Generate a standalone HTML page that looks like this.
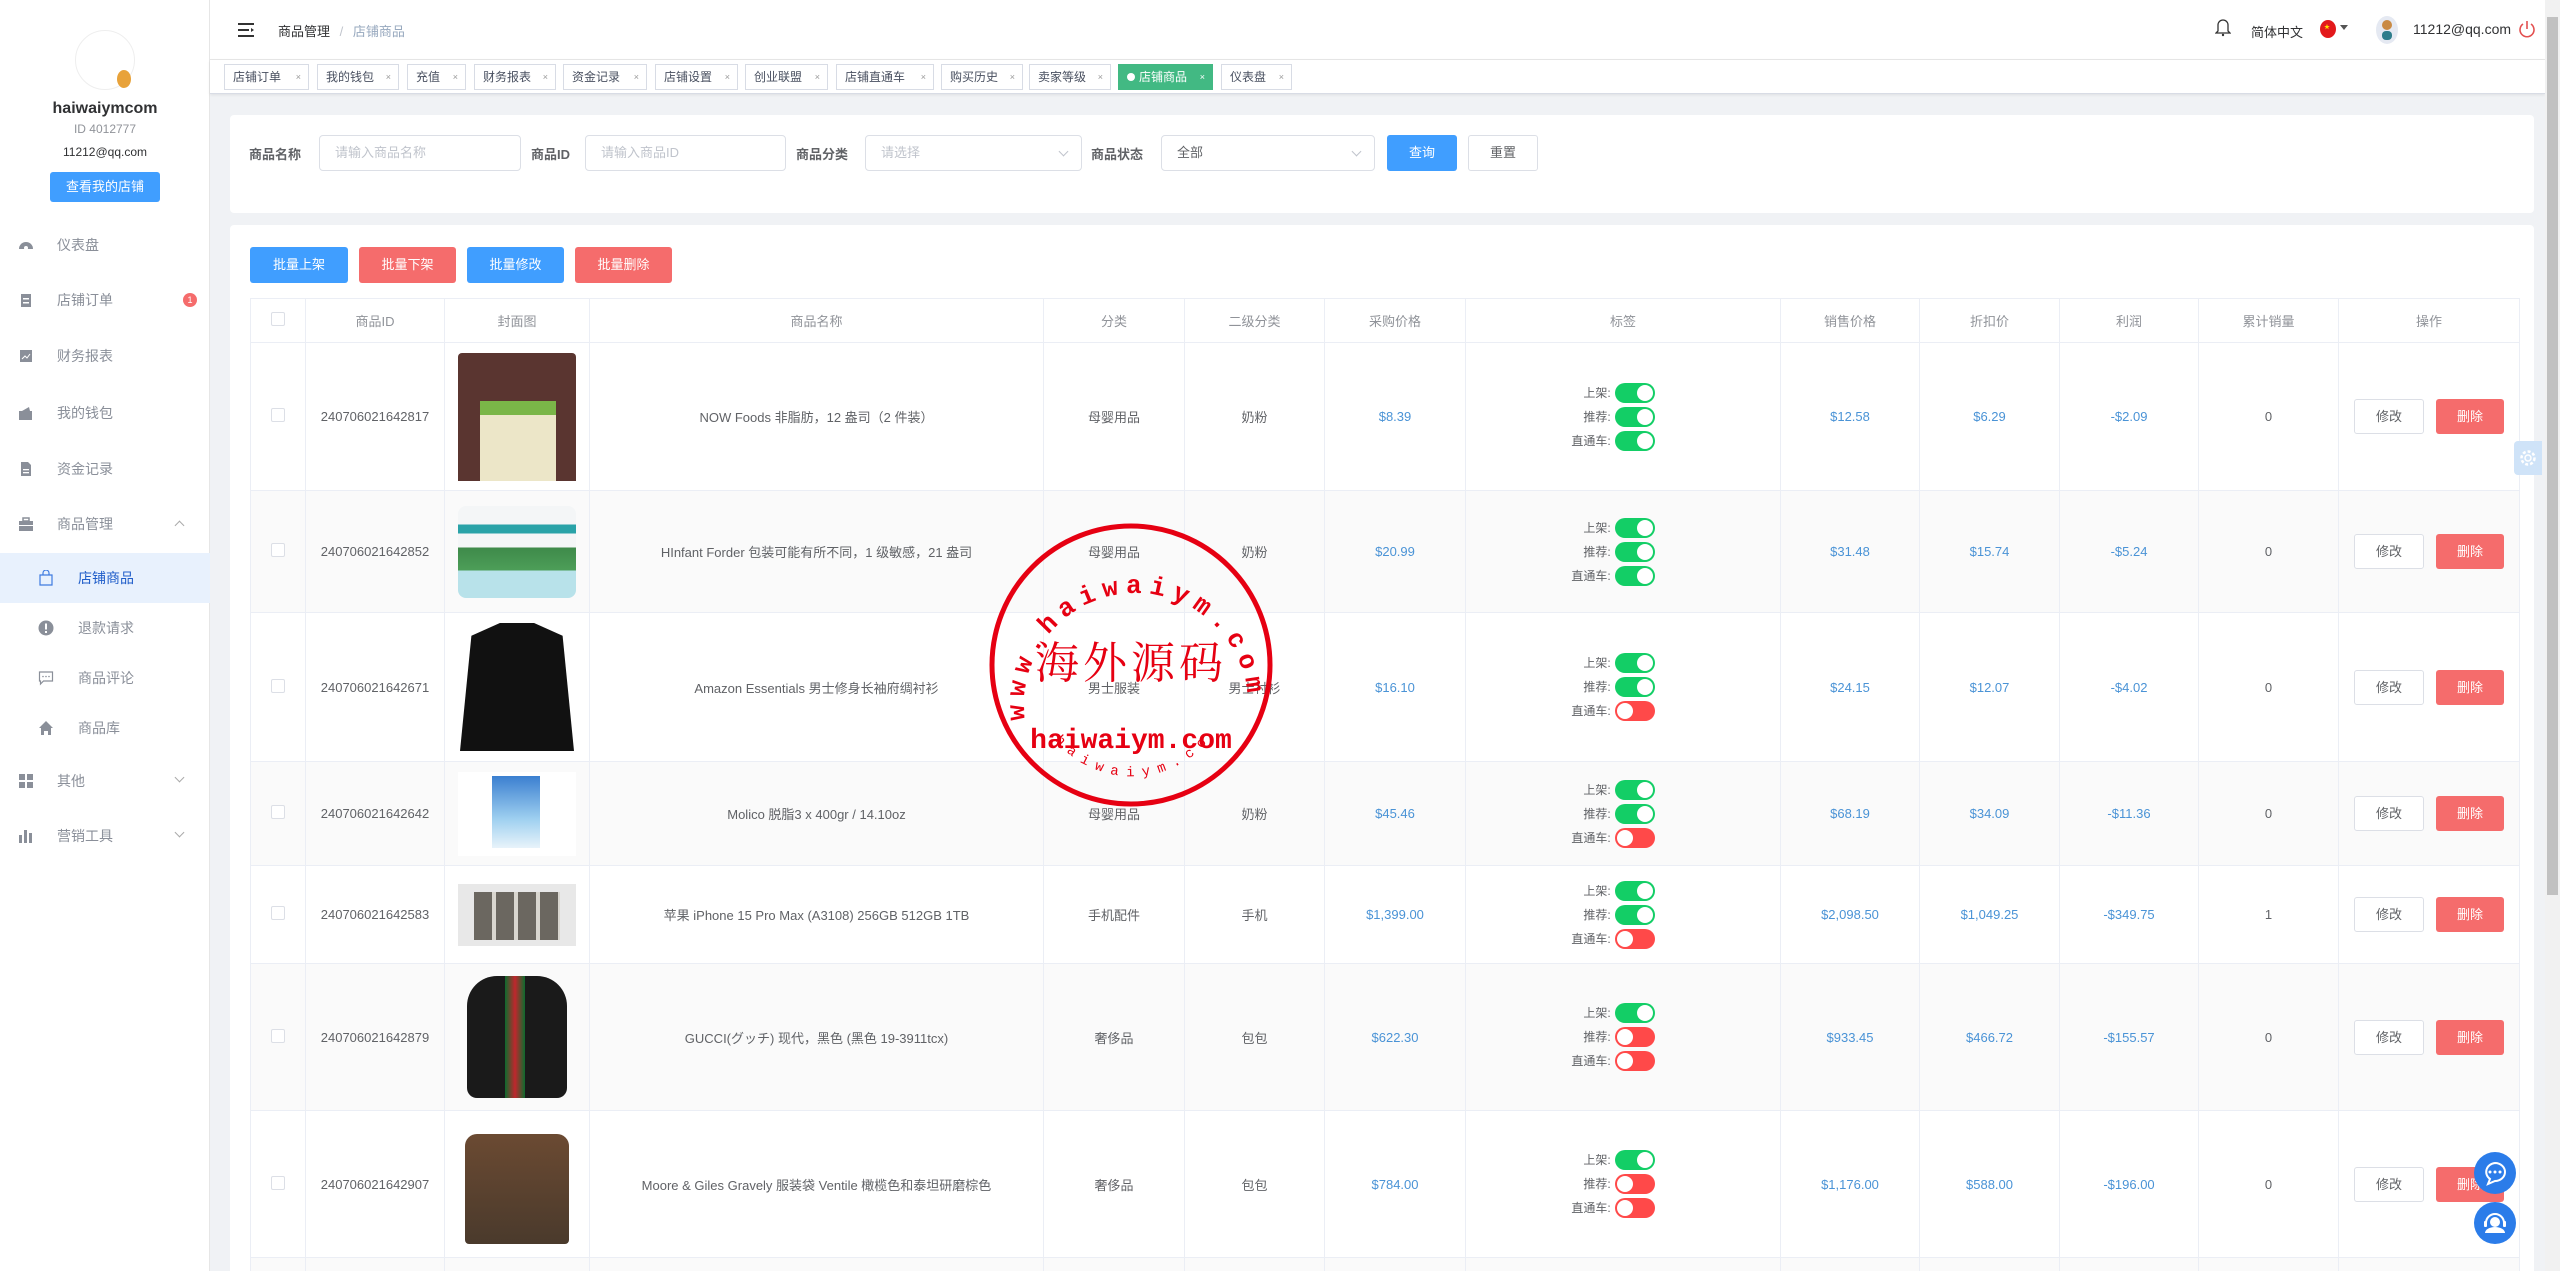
<!DOCTYPE html>
<html><head><meta charset="utf-8">
<style>
*{box-sizing:border-box;margin:0;padding:0}
html,body{width:2560px;height:1271px;overflow:hidden}
body{background:#f0f2f5;font-family:"Liberation Sans","Noto Sans CJK SC",sans-serif;color:#606266;position:relative}
#wrap{position:absolute;left:0;top:0;width:2560px;height:1271px;overflow:hidden}
.abs{position:absolute}
#side{left:0;top:0;width:210px;height:1271px;background:#fff;border-right:1px solid #e6e6e6}
.mi{position:absolute;left:0;width:210px;height:50px;display:flex;align-items:center;font-size:14px;color:#8a8f99}
.mi .ic{position:absolute;left:18px;width:16px;height:16px}
.mi .tx{position:absolute;left:57px}
.sub .ic{left:38px}.sub .tx{left:78px}
.arrow{position:absolute;left:176px;width:7px;height:7px;border-right:1px solid #aaa;border-bottom:1px solid #aaa}
#top{left:210px;top:0;width:2335px;height:60px;background:#fff;border-bottom:1px solid #e8e8e8}
#tabs{left:210px;top:60px;width:2335px;height:34px;background:#fff;border-bottom:1px solid #d8dce5;box-shadow:0 1px 3px rgba(0,0,0,.08)}
.tab{position:absolute;top:4px;height:26px;border:1px solid #d8dce5;background:#fff;font-size:12px;color:#495060;line-height:24px;padding-left:8px}
.tab i{font-style:normal;font-size:9px;color:#999;position:absolute;right:7px;top:0}
.tab.act{background:#42b983;border-color:#42b983;color:#fff}
.tab.act i{color:#fff}
.card{background:#fff;border-radius:4px}
.lbl{position:absolute;font-size:13px;color:#606266;font-weight:bold}
.inp{position:absolute;height:36px;border:1px solid #dcdfe6;border-radius:4px;font-size:13px;color:#c0c4cc;line-height:34px;padding-left:15px;background:#fff}
.chev{position:absolute;right:14px;top:12px;width:7px;height:7px;border-right:1px solid #c0c4cc;border-bottom:1px solid #c0c4cc;transform:rotate(45deg)}
.btn{position:absolute;height:36px;border-radius:3px;font-size:13px;color:#fff;text-align:center;line-height:36px}
table{position:absolute;left:250px;top:298px;border-collapse:collapse;table-layout:fixed;width:2269px;font-size:13px;color:#606266}
td,th{border:1px solid #ebeef5;text-align:center;vertical-align:middle;padding:0}
th{height:44px;font-weight:normal;color:#909399}
tr.st td{background:#fafafa}
.cb{display:inline-block;width:14px;height:14px;border:1px solid #dcdfe6;border-radius:2px;background:#fff}
.blue{color:#4a93d6}
.tags{display:inline-block;text-align:right;font-size:12px;color:#606266;margin-left:-20px}
.tags div{height:24px;line-height:24px;display:flex;align-items:center;justify-content:flex-end}
.sw{display:inline-block;width:40px;height:20px;border-radius:10px;position:relative;margin-left:4px}
.sw:after{content:"";position:absolute;top:2px;width:16px;height:16px;border-radius:50%;background:#fff}
.on{background:#13ce66}.on:after{right:2px}
.off{background:#ff4949}.off:after{left:2px}
.ed{display:inline-block;width:70px;height:35px;line-height:33px;border:1px solid #dcdfe6;border-radius:3px;color:#606266;background:#fff;vertical-align:middle}
.de{display:inline-block;width:68px;height:35px;line-height:35px;border-radius:3px;background:#f56c6c;color:#fff;margin-left:12px;vertical-align:middle}
.img{margin:0 auto;position:relative}
</style></head><body><div id="wrap">

<div id="side" class="abs">
  <div class="abs" style="left:75px;top:30px;width:60px;height:60px;border-radius:50%;border:1px solid #eee"></div>
  <div class="abs" style="left:117px;top:70px;width:14px;height:18px;border-radius:50%;background:#e8a23a"></div>
  <div class="abs" style="left:0;top:100px;width:210px;text-align:center;font-size:16px;font-weight:bold;color:#303133">haiwaiymcom</div>
  <div class="abs" style="left:0;top:122px;width:210px;text-align:center;font-size:12px;color:#909399">ID 4012777</div>
  <div class="abs" style="left:0;top:145px;width:210px;text-align:center;font-size:12px;color:#303133">11212@qq.com</div>
  <div class="abs" style="left:50px;top:172px;width:110px;height:30px;background:#409eff;border-radius:3px;color:#fff;font-size:13px;text-align:center;line-height:30px">查看我的店铺</div>

  <div class="mi" style="top:220px"><svg class="ic" viewBox="0 0 16 16"><path d="M1 12a7 7 0 0114 0z" fill="#8a8f99"/><circle cx="8" cy="11" r="2" fill="#fff"/></svg><span class="tx">仪表盘</span></div>
  <div class="mi" style="top:275px"><svg class="ic" viewBox="0 0 16 16"><rect x="3" y="2" width="10" height="13" fill="#8a8f99"/><rect x="5" y="6" width="6" height="1.5" fill="#fff"/><rect x="5" y="10" width="6" height="1.5" fill="#fff"/></svg><span class="tx">店铺订单</span><span class="abs" style="left:183px;top:18px;width:14px;height:14px;border-radius:50%;background:#f56c6c;color:#fff;font-size:9px;text-align:center;line-height:14px">1</span></div>
  <div class="mi" style="top:331px"><svg class="ic" viewBox="0 0 16 16"><rect x="2" y="2" width="12" height="12" fill="#8a8f99"/><path d="M4 11l3-3 2 2 3-4" stroke="#fff" fill="none"/></svg><span class="tx">财务报表</span></div>
  <div class="mi" style="top:388px"><svg class="ic" viewBox="0 0 16 16"><rect x="1" y="6" width="13" height="9" fill="#8a8f99"/><path d="M4 6l7-4 1 4z" fill="#8a8f99"/></svg><span class="tx">我的钱包</span></div>
  <div class="mi" style="top:444px"><svg class="ic" viewBox="0 0 16 16"><path d="M3 1h7l3 3v11H3z" fill="#8a8f99"/><rect x="5" y="8" width="6" height="1.3" fill="#fff"/><rect x="5" y="11" width="6" height="1.3" fill="#fff"/></svg><span class="tx">资金记录</span></div>
  <div class="mi" style="top:499px"><svg class="ic" viewBox="0 0 16 16"><rect x="1" y="5" width="14" height="10" fill="#8a8f99"/><rect x="5" y="2" width="6" height="3" fill="none" stroke="#8a8f99" stroke-width="1.5"/><rect x="1" y="9" width="14" height="1" fill="#fff"/></svg><span class="tx">商品管理</span><span class="arrow" style="top:23px;transform:rotate(-135deg)"></span></div>
  <div class="mi sub" style="top:553px;background:#e8f1fd;color:#1f5dc9"><svg class="ic" viewBox="0 0 16 16"><path d="M2 5h12v10H2z M5 5V3a3 3 0 016 0v2" fill="none" stroke="#3e7be0" stroke-width="1.2"/></svg><span class="tx">店铺商品</span></div>
  <div class="mi sub" style="top:603px"><svg class="ic" viewBox="0 0 16 16"><circle cx="8" cy="8" r="7.5" fill="#8a8f99"/><rect x="7" y="3.5" width="2" height="6" fill="#fff"/><rect x="7" y="11" width="2" height="2" fill="#fff"/></svg><span class="tx">退款请求</span></div>
  <div class="mi sub" style="top:653px"><svg class="ic" viewBox="0 0 16 16"><path d="M1.5 2h13v9h-9l-3 3v-3h-1z" fill="none" stroke="#8a8f99" stroke-width="1.2"/><circle cx="5" cy="6.5" r=".8" fill="#8a8f99"/><circle cx="8" cy="6.5" r=".8" fill="#8a8f99"/><circle cx="11" cy="6.5" r=".8" fill="#8a8f99"/></svg><span class="tx">商品评论</span></div>
  <div class="mi sub" style="top:703px"><svg class="ic" viewBox="0 0 16 16"><path d="M8 1l7 7h-2v7h-3v-4H6v4H3V8H1z" fill="#8a8f99"/></svg><span class="tx">商品库</span></div>
  <div class="mi" style="top:756px"><svg class="ic" viewBox="0 0 16 16"><rect x="1" y="1" width="6" height="6" fill="#8a8f99"/><rect x="9" y="1" width="6" height="6" fill="#8a8f99"/><rect x="1" y="9" width="6" height="6" fill="#8a8f99"/><rect x="9" y="9" width="6" height="6" fill="#8a8f99"/></svg><span class="tx">其他</span><span class="arrow" style="top:18px;transform:rotate(45deg)"></span></div>
  <div class="mi" style="top:811px"><svg class="ic" viewBox="0 0 16 16"><rect x="1" y="7" width="3" height="8" fill="#8a8f99"/><rect x="6" y="2" width="3" height="13" fill="#8a8f99"/><rect x="11" y="5" width="3" height="10" fill="#8a8f99"/></svg><span class="tx">营销工具</span><span class="arrow" style="top:18px;transform:rotate(45deg)"></span></div>
</div>

<div id="top" class="abs">
  <svg class="abs" style="left:28px;top:23px" width="16" height="14" viewBox="0 0 16 14"><rect y="0" width="16" height="2" fill="#333"/><rect y="6" width="11" height="2" fill="#333"/><rect y="12" width="16" height="2" fill="#333"/><path d="M13 5l3 2-3 2z" fill="#333"/></svg>
  <div class="abs" style="left:68px;top:21px;font-size:13px;color:#303133">商品管理 <span style="color:#c0c4cc;margin:0 6px">/</span> <span style="color:#97a8be">店铺商品</span></div>
  <svg class="abs" style="left:2005px;top:17px" width="16" height="20" viewBox="0 0 16 20"><path d="M3 14V8a5 5 0 0110 0v6l2 2H1z" fill="none" stroke="#333" stroke-width="1.3"/><circle cx="8" cy="18" r="1.2" fill="#333"/></svg>
  <div class="abs" style="left:2041px;top:22px;font-size:13px;color:#303133">简体中文</div>
  <div class="abs" style="left:2110px;top:20px;width:16px;height:18px;border-radius:50%;background:#e3191b"></div>
  <div class="abs" style="left:2114px;top:22px;font-size:6px;color:#ffde00">★</div>
  <div class="abs" style="left:2130px;top:25px;width:0;height:0;border-left:4px solid transparent;border-right:4px solid transparent;border-top:5px solid #555"></div>
  <div class="abs" style="left:2166px;top:16px;width:22px;height:28px;border-radius:50%;background:#e5e9f2"></div>
  <div class="abs" style="left:2172px;top:20px;width:10px;height:10px;border-radius:50%;background:#c98a44"></div>
  <div class="abs" style="left:2172px;top:31px;width:10px;height:9px;border-radius:4px;background:#2e7d8b"></div>
  <div class="abs" style="left:2203px;top:21px;font-size:14px;color:#303133">11212@qq.com</div>
  <svg class="abs" style="left:2308px;top:19px" width="18" height="20" viewBox="0 0 18 20"><path d="M5 5a7 7 0 108 0" fill="none" stroke="#e35050" stroke-width="1.6"/><path d="M9 2v8" stroke="#e35050" stroke-width="1.6"/></svg>
</div>

<div id="tabs" class="abs">
  <div class="tab" style="left:14px;width:85px">店铺订单<i>×</i></div>
  <div class="tab" style="left:107px;width:82px">我的钱包<i>×</i></div>
  <div class="tab" style="left:197px;width:59px">充值<i>×</i></div>
  <div class="tab" style="left:264px;width:82px">财务报表<i>×</i></div>
  <div class="tab" style="left:353px;width:84px">资金记录<i>×</i></div>
  <div class="tab" style="left:445px;width:83px">店铺设置<i>×</i></div>
  <div class="tab" style="left:535px;width:83px">创业联盟<i>×</i></div>
  <div class="tab" style="left:626px;width:98px">店铺直通车<i>×</i></div>
  <div class="tab" style="left:731px;width:82px">购买历史<i>×</i></div>
  <div class="tab" style="left:819px;width:82px">卖家等级<i>×</i></div>
  <div class="tab act" style="left:908px;width:95px"><span style="display:inline-block;width:8px;height:8px;border-radius:50%;background:#fff;margin-right:4px"></span>店铺商品<i>×</i></div>
  <div class="tab" style="left:1011px;width:71px">仪表盘<i>×</i></div>
</div>

<div class="abs" style="left:2545px;top:0;width:15px;height:1271px;background:#f1f1f1"></div>
<div class="abs" style="left:2547px;top:17px;width:11px;height:878px;background:#c1c1c1"></div>

<div class="card abs" style="left:230px;top:115px;width:2304px;height:98px">
  <div class="lbl" style="left:19px;top:29px">商品名称</div>
  <div class="inp" style="left:89px;top:20px;width:202px">请输入商品名称</div>
  <div class="lbl" style="left:301px;top:29px">商品ID</div>
  <div class="inp" style="left:355px;top:20px;width:201px">请输入商品ID</div>
  <div class="lbl" style="left:566px;top:29px">商品分类</div>
  <div class="inp" style="left:635px;top:20px;width:217px">请选择<span class="chev"></span></div>
  <div class="lbl" style="left:861px;top:29px">商品状态</div>
  <div class="inp" style="left:931px;top:20px;width:214px;color:#606266">全部<span class="chev"></span></div>
  <div class="btn" style="left:1157px;top:20px;width:70px;background:#409eff">查询</div>
  <div class="btn" style="left:1238px;top:20px;width:70px;border:1px solid #dcdfe6;color:#606266;background:#fff;line-height:34px">重置</div>
</div>

<div class="card abs" style="left:230px;top:225px;width:2304px;height:1100px"></div>
<div class="btn" style="left:250px;top:247px;width:98px;background:#409eff">批量上架</div>
<div class="btn" style="left:359px;top:247px;width:97px;background:#f56c6c">批量下架</div>
<div class="btn" style="left:467px;top:247px;width:97px;background:#409eff">批量修改</div>
<div class="btn" style="left:575px;top:247px;width:97px;background:#f56c6c">批量删除</div>

<table>
<colgroup><col style="width:55px"><col style="width:139px"><col style="width:145px"><col style="width:454px"><col style="width:141px"><col style="width:140px"><col style="width:141px"><col style="width:315px"><col style="width:139px"><col style="width:140px"><col style="width:139px"><col style="width:140px"><col style="width:181px"></colgroup>
<tr><th><span class="cb"></span></th><th>商品ID</th><th>封面图</th><th>商品名称</th><th>分类</th><th>二级分类</th><th>采购价格</th><th>标签</th><th>销售价格</th><th>折扣价</th><th>利润</th><th>累计销量</th><th>操作</th></tr>

<tr style="height:148px"><td><span class="cb"></span></td><td>240706021642817</td><td><div class="img" style="width:118px;height:128px;background:#5a3530;border-radius:4px 4px 0 0"><div class="abs" style="left:22px;top:48px;width:76px;height:80px;background:#ece6c8;border-top:14px solid #7ab648"></div></div></td><td>NOW Foods 非脂肪，12 盎司（2 件装）</td><td>母婴用品</td><td>奶粉</td><td class="blue">$8.39</td><td><div class="tags"><div>上架:<span class="sw on"></span></div><div>推荐:<span class="sw on"></span></div><div>直通车:<span class="sw on"></span></div></div></td><td class="blue">$12.58</td><td class="blue">$6.29</td><td class="blue">-$2.09</td><td>0</td><td><span class="ed">修改</span><span class="de">删除</span></td></tr>

<tr class="st" style="height:122px"><td><span class="cb"></span></td><td>240706021642852</td><td><div class="img" style="width:118px;height:92px;background:linear-gradient(#f4f6f7 0,#f4f6f7 20%,#2aa3a8 20%,#2aa3a8 30%,#f4f6f7 30%,#f4f6f7 45%,#3e8a4a 45%,#4d9e58 70%,#b8e2ea 70%);border-radius:8px"></div></td><td>HInfant Forder 包装可能有所不同，1 级敏感，21 盎司</td><td>母婴用品</td><td>奶粉</td><td class="blue">$20.99</td><td><div class="tags"><div>上架:<span class="sw on"></span></div><div>推荐:<span class="sw on"></span></div><div>直通车:<span class="sw on"></span></div></div></td><td class="blue">$31.48</td><td class="blue">$15.74</td><td class="blue">-$5.24</td><td>0</td><td><span class="ed">修改</span><span class="de">删除</span></td></tr>

<tr style="height:149px"><td><span class="cb"></span></td><td>240706021642671</td><td><div class="img" style="width:114px;height:128px;background:#111;clip-path:polygon(35% 0,65% 0,90% 10%,100% 100%,0 100%,10% 10%)"></div></td><td>Amazon Essentials 男士修身长袖府绸衬衫</td><td>男士服装</td><td>男士衬衫</td><td class="blue">$16.10</td><td><div class="tags"><div>上架:<span class="sw on"></span></div><div>推荐:<span class="sw on"></span></div><div>直通车:<span class="sw off"></span></div></div></td><td class="blue">$24.15</td><td class="blue">$12.07</td><td class="blue">-$4.02</td><td>0</td><td><span class="ed">修改</span><span class="de">删除</span></td></tr>

<tr class="st" style="height:104px"><td><span class="cb"></span></td><td>240706021642642</td><td><div class="img" style="width:118px;height:84px;background:#fff"><div class="abs" style="left:34px;top:4px;width:48px;height:72px;background:linear-gradient(#3b7fd0,#9fd0f0 60%,#e8f3fa)"></div></div></td><td>Molico 脱脂3 x 400gr / 14.10oz</td><td>母婴用品</td><td>奶粉</td><td class="blue">$45.46</td><td><div class="tags"><div>上架:<span class="sw on"></span></div><div>推荐:<span class="sw on"></span></div><div>直通车:<span class="sw off"></span></div></div></td><td class="blue">$68.19</td><td class="blue">$34.09</td><td class="blue">-$11.36</td><td>0</td><td><span class="ed">修改</span><span class="de">删除</span></td></tr>

<tr style="height:98px"><td><span class="cb"></span></td><td>240706021642583</td><td><div class="img" style="width:118px;height:62px;background:#e8e8e8"><div class="abs" style="left:16px;top:8px;width:86px;height:48px;background:repeating-linear-gradient(90deg,#6b6760 0 18px,#d9d6cf 18px 22px)"></div></div></td><td>苹果 iPhone 15 Pro Max (A3108) 256GB 512GB 1TB</td><td>手机配件</td><td>手机</td><td class="blue">$1,399.00</td><td><div class="tags"><div>上架:<span class="sw on"></span></div><div>推荐:<span class="sw on"></span></div><div>直通车:<span class="sw off"></span></div></div></td><td class="blue">$2,098.50</td><td class="blue">$1,049.25</td><td class="blue">-$349.75</td><td>1</td><td><span class="ed">修改</span><span class="de">删除</span></td></tr>

<tr class="st" style="height:147px"><td><span class="cb"></span></td><td>240706021642879</td><td><div class="img" style="width:100px;height:122px;background:linear-gradient(90deg,#1a1a1a 0,#1a1a1a 38%,#0d6b2e 38%,#c0262d 48%,#0d6b2e 58%,#1a1a1a 58%);border-radius:30px 30px 10px 10px"></div></td><td>GUCCI(グッチ) 现代，黑色 (黑色 19-3911tcx)</td><td>奢侈品</td><td>包包</td><td class="blue">$622.30</td><td><div class="tags"><div>上架:<span class="sw on"></span></div><div>推荐:<span class="sw off"></span></div><div>直通车:<span class="sw off"></span></div></div></td><td class="blue">$933.45</td><td class="blue">$466.72</td><td class="blue">-$155.57</td><td>0</td><td><span class="ed">修改</span><span class="de">删除</span></td></tr>

<tr style="height:147px"><td><span class="cb"></span></td><td>240706021642907</td><td><div class="img" style="width:104px;height:110px;background:linear-gradient(#6b4a32,#4a3a2c);border-radius:12px 12px 4px 4px;margin-top:10px"></div></td><td>Moore &amp; Giles Gravely 服装袋 Ventile 橄榄色和泰坦研磨棕色</td><td>奢侈品</td><td>包包</td><td class="blue">$784.00</td><td><div class="tags"><div>上架:<span class="sw on"></span></div><div>推荐:<span class="sw off"></span></div><div>直通车:<span class="sw off"></span></div></div></td><td class="blue">$1,176.00</td><td class="blue">$588.00</td><td class="blue">-$196.00</td><td>0</td><td><span class="ed">修改</span><span class="de">删除</span></td></tr>
<tr class="st" style="height:40px"><td></td><td></td><td></td><td></td><td></td><td></td><td></td><td></td><td></td><td></td><td></td><td></td><td></td></tr>
</table>

<div class="abs" style="left:2514px;top:441px;width:28px;height:34px;background:#cfe3f8;border-radius:4px 0 0 4px"></div>
<svg class="abs" style="left:2518px;top:448px" width="20" height="20" viewBox="0 0 20 20"><circle cx="10" cy="10" r="6.5" fill="none" stroke="#fff" stroke-width="2.5" stroke-dasharray="3 2"/><circle cx="10" cy="10" r="3" fill="none" stroke="#fff" stroke-width="1.5"/></svg>

<svg class="abs" style="left:2474px;top:1152px" width="42" height="42" viewBox="0 0 42 42"><circle cx="21" cy="21" r="21" fill="#2b7ce9"/><path d="M21 11a10 9 0 110 18l-7 3 2-5a10 9 0 015-16z" fill="none" stroke="#fff" stroke-width="2"/><circle cx="16" cy="20" r="1.5" fill="#fff"/><circle cx="21" cy="20" r="1.5" fill="#fff"/><circle cx="26" cy="20" r="1.5" fill="#fff"/></svg>
<svg class="abs" style="left:2474px;top:1202px" width="42" height="42" viewBox="0 0 42 42"><circle cx="21" cy="21" r="21" fill="#2b7ce9"/><path d="M12 21a9 9 0 0118 0" fill="none" stroke="#fff" stroke-width="2"/><circle cx="21" cy="20" r="5" fill="#fff"/><path d="M11 31a10 6 0 0120 0z" fill="#fff"/><rect x="10" y="19" width="3" height="6" rx="1" fill="#fff"/><rect x="29" y="19" width="3" height="6" rx="1" fill="#fff"/></svg>

<svg class="abs" style="left:985px;top:520px" width="292" height="292" viewBox="0 0 292 292">
  <defs>
    <path id="arcTop" d="M40 200 A112 112 0 1 1 262 170"/>
    <path id="arcBot" d="M70 220 A100 100 0 0 0 228 215"/>
  </defs>
  <circle cx="146" cy="145" r="139" fill="none" stroke="#e60012" stroke-width="5"/>
  <text font-family="Liberation Mono,monospace" font-weight="bold" font-size="26" fill="#e60012" letter-spacing="7"><textPath href="#arcTop">www.haiwaiym.com</textPath></text>
  <text x="146" y="158" text-anchor="middle" font-family="Noto Serif CJK SC,serif" font-size="44" fill="#e60012" letter-spacing="4">海外源码</text>
  <text x="146" y="228" text-anchor="middle" font-family="Liberation Mono,monospace" font-weight="bold" font-size="28" fill="#e60012">haiwaiym.com</text>
  <text font-family="Liberation Mono,monospace" font-size="14" fill="#e60012" letter-spacing="8"><textPath href="#arcBot">haiwaiym.com</textPath></text>
</svg>
</div></body></html>
